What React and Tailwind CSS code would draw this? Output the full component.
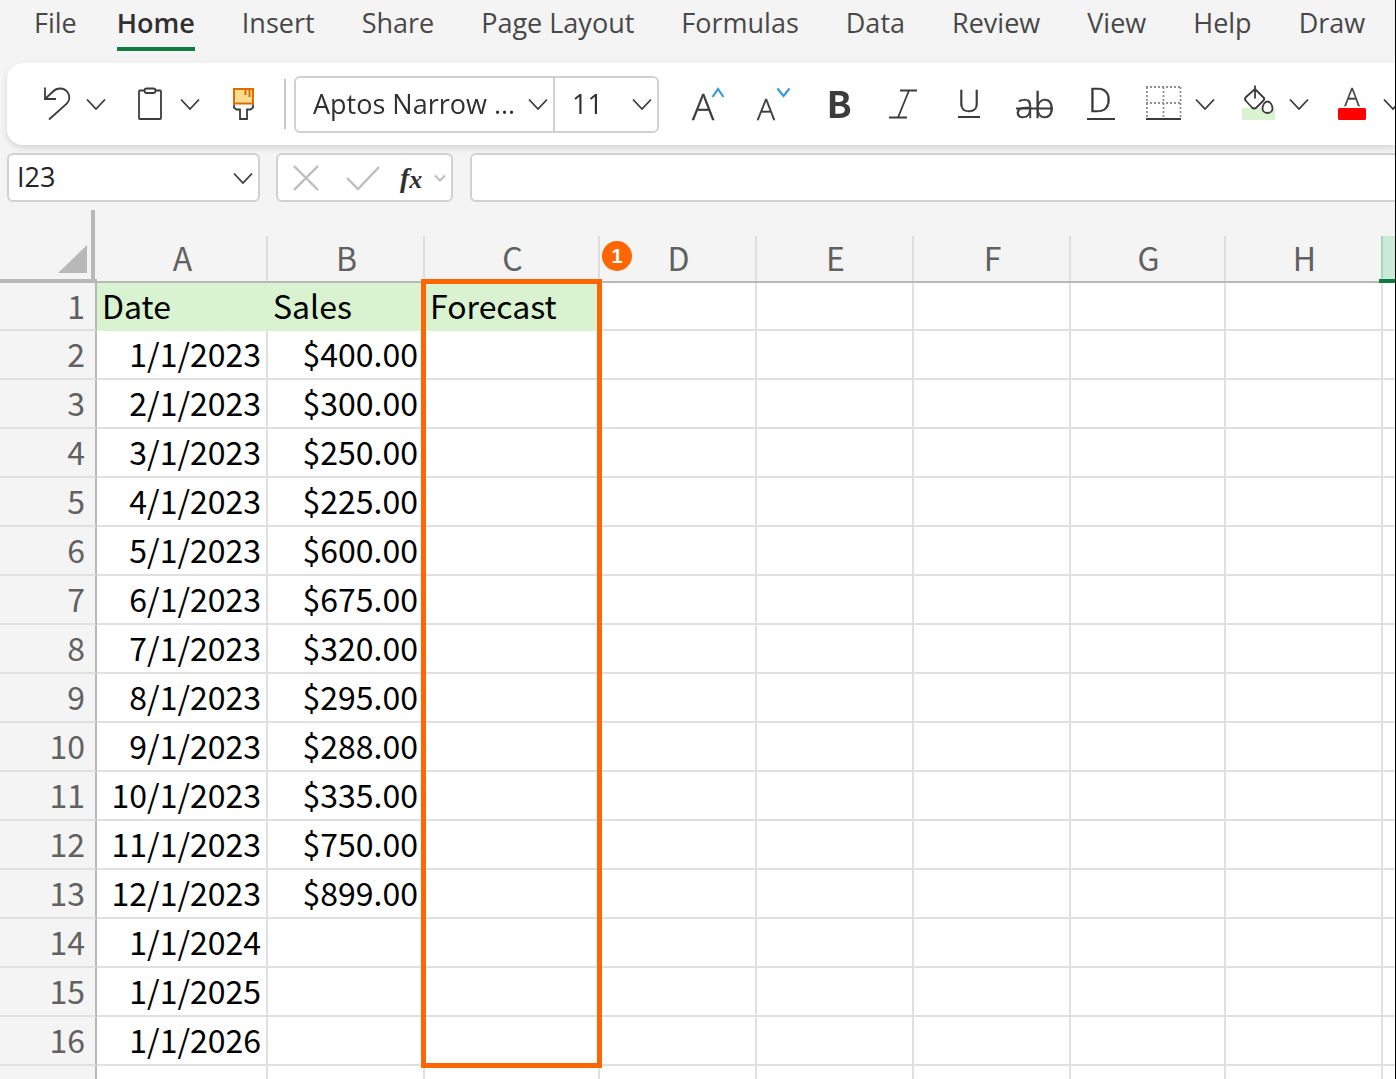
const tabs = ['File', 'Home', 'Insert', 'Share', 'Page Layout', 'Formulas', 'Data', 'Review', 'View', 'Help', 'Draw'];

const columns = ['A', 'B', 'C', 'D', 'E', 'F', 'G', 'H'];

const rows = [
  ['Date', 'Sales', 'Forecast'],
  ['1/1/2023', '$400.00'],
  ['2/1/2023', '$300.00'],
  ['3/1/2023', '$250.00'],
  ['4/1/2023', '$225.00'],
  ['5/1/2023', '$600.00'],
  ['6/1/2023', '$675.00'],
  ['7/1/2023', '$320.00'],
  ['8/1/2023', '$295.00'],
  ['9/1/2023', '$288.00'],
  ['10/1/2023', '$335.00'],
  ['11/1/2023', '$750.00'],
  ['12/1/2023', '$899.00'],
  ['1/1/2024'],
  ['1/1/2025'],
  ['1/1/2026'],
  [],
];

function Icon({ children }) {
  return (
    <svg viewBox="0 0 40 40" className="block h-10 w-10 overflow-visible" fill="none" stroke="#3b3b3b" strokeWidth="1.8" aria-hidden="true">
      {children}
    </svg>
  );
}

function Chevron() {
  return (
    <svg viewBox="0 0 24 40" className="block h-10 w-6" fill="none" stroke="#3b3b3b" strokeWidth="1.8" aria-hidden="true">
      <path d="M3 15.500l9 9.500 9-9.500" />
    </svg>
  );
}

function Tool({ label, children }) {
  return (
    <button type="button" aria-label={label} className="shrink-0">
      <Icon>{children}</Icon>
    </button>
  );
}

function SplitTool({ label, children }) {
  return (
    <div className="flex shrink-0 gap-2">
      <Tool label={label}>{children}</Tool>
      <button type="button" aria-label={label + ' options'}>
        <Chevron />
      </button>
    </div>
  );
}

function Letter({ x, y, size, className, children }) {
  return (
    <text x={x} y={y} fontSize={size} textAnchor="middle" fill="#3b3b3b" className={className}>
      {children}
    </text>
  );
}

const thin = "font-['Open_Sans'] font-light [stroke-width:0.5px]";

function Tabs() {
  return (
    <nav className="flex h-[63px] gap-[47px] overflow-hidden pl-[34px] text-[27px] leading-[45px] text-[#484848]">
      {tabs.map((t) => (
        <button
          key={t}
          type="button"
          className={
            t === 'Home'
              ? '-ml-[7px] flex h-[51px] shrink-0 border-b-4 border-[#107c41] font-semibold text-[#303030]'
              : 'flex h-[51px] shrink-0 border-b-4 border-transparent'
          }
        >
          {t}
        </button>
      ))}
    </nav>
  );
}

function Toolbar() {
  return (
    <div className="ml-[7px] flex h-[82px] items-center overflow-hidden rounded-l-2xl bg-white pl-[29px]">
      <div className="flex shrink-0 gap-[22px]">
        <SplitTool label="Undo">
          <path d="M9 3.500V15h11" />
          <path d="M9 15l8-7.500c2-2 4-3 7-3 8 0 12 8.500 7 15L13 35.500" />
        </SplitTool>
        <SplitTool label="Paste">
          <rect x="9" y="6.500" width="22" height="28.500" rx="1" />
          <rect x="14.500" y="4.500" width="11" height="4.500" rx="2.200" fill="#fff" />
        </SplitTool>
        <Tool label="Format painter">
          <rect x="10" y="5" width="19" height="14.500" fill="#fadb8f" stroke="#e06c00" strokeWidth="2" />
          <path d="M21.500 5v6M25.500 5v8" stroke="#e06c00" strokeWidth="2" />
          <path d="M10 20.500v3l2.500 2h3.500v9.500h7v-9.500h3.500l2.500-2v-3" />
        </Tool>
      </div>
      <div className="ml-5 h-[50px] w-0.5 shrink-0 bg-[#c8c8c8]" />
      <div className="ml-2 flex h-[57px] w-[365px] shrink-0 rounded-md border-2 border-[#d1d1d1] text-[27px] text-[#303030]">
        <div className="relative flex w-[259px] items-center border-r-2 border-[#d1d1d1]">
          <select aria-label="Font" className="h-full w-full appearance-none bg-transparent pl-[17px] outline-none">
            <option>Aptos Narrow ...</option>
          </select>
          <span className="pointer-events-none absolute right-[3px]">
            <Chevron />
          </span>
        </div>
        <div className="relative flex flex-1 items-center">
          <select aria-label="Font size" className="h-full w-full appearance-none bg-transparent pl-[17px] outline-none">
            <option>11</option>
          </select>
          <span className="pointer-events-none absolute right-[3px]">
            <Chevron />
          </span>
        </div>
      </div>
      <div className="ml-7 flex shrink-0 gap-[26px]">
        <Tool label="Increase font size">
          <Letter x="16" y="36" size="37" className={thin}>A</Letter>
          <path d="M25.500 13l5.500-8 5.500 8" stroke="#3a9bdc" strokeWidth="2.200" />
        </Tool>
        <Tool label="Decrease font size">
          <Letter x="13" y="36" size="30" className={thin}>A</Letter>
          <path d="M24.500 4.500l6 7.500 6-7.500" stroke="#3a9bdc" strokeWidth="2.200" />
        </Tool>
        <Tool label="Bold">
          <Letter x="20" y="34" size="37" className="[stroke:none] font-['Noto_Sans_CJK_SC'] font-bold">B</Letter>
        </Tool>
        <Tool label="Italic">
          <path d="M15 6.500h17M4 33.500h18M24 6.500L13 33.500" />
        </Tool>
        <Tool label="Underline">
          <Letter x="18" y="28" size="32" className={thin}>U</Letter>
          <path d="M7 33h22" />
        </Tool>
        <Tool label="Strikethrough">
          <Letter x="18" y="34" size="35" className={thin}>ab</Letter>
          <path d="M-1 24.500h37" />
        </Tool>
        <Tool label="Double underline">
          <Letter x="17" y="28" size="33" className={thin}>D</Letter>
          <path d="M4 35h28" />
        </Tool>
      </div>
      <div className="ml-[22px] flex shrink-0 gap-[22px]">
        <SplitTool label="Borders">
          <path d="M1 3h35M1 19h35M2 3v31M18.500 3v31M35.500 3v31" stroke="#8f8f8f" strokeDasharray="2 2" />
          <path d="M1 35h35" strokeWidth="2" />
        </SplitTool>
        <SplitTool label="Fill color">
          <rect x="3" y="24" width="33" height="12" rx="1.500" fill="#d9f2d0" stroke="none" />
          <path d="M16 1.500v13M16 5l8.500 8.500q1.500 1.500 0 3l-7 7q-2.500 2-4.500 0l-6-6.500q-2-2 0-4z" />
          <path d="M28.500 17.500c3 0 5 4 5 7a5 4.500 0 0 1-10 0c0-3 2-7 5-7z" fill="#fff" />
        </SplitTool>
        <SplitTool label="Font color">
          <Letter x="19" y="22" size="25" className={thin}>A</Letter>
          <rect x="5" y="24" width="28" height="12" rx="1.500" fill="#ff0000" stroke="none" />
        </SplitTool>
      </div>
    </div>
  );
}

function FormulaBar() {
  return (
    <div className="mt-2 flex h-[49px] pl-[7px]">
      <div className="flex w-[253px] shrink-0 items-center rounded-md border-2 border-[#d1d1d1] bg-white">
        <input aria-label="Name box" defaultValue="I23" className="w-0 flex-1 bg-transparent pl-2 text-[27px] text-[#242424] outline-none" />
        <button type="button" aria-label="Name box options" className="mr-[3px]">
          <Chevron />
        </button>
      </div>
      <div className="ml-4 flex w-[177px] shrink-0 items-center rounded-md border-2 border-[#d1d1d1] bg-white">
        <button type="button" aria-label="Cancel" className="ml-2">
          <svg viewBox="0 0 40 40" className="block h-10 w-10" fill="none" stroke="#bdbdbd" strokeWidth="2.400" aria-hidden="true">
            <path d="M8 8l24 24M32 8L8 32" />
          </svg>
        </button>
        <button type="button" aria-label="Enter" className="ml-4">
          <svg viewBox="0 0 40 40" className="block h-10 w-10" fill="none" stroke="#bdbdbd" strokeWidth="2.400" aria-hidden="true">
            <path d="M5 20l11 11L37 9" />
          </svg>
        </button>
        <button type="button" aria-label="Insert function" className="ml-[18px] flex items-center font-['Liberation_Serif'] text-[28px] leading-9 font-bold text-[#303030]">
          <i>f</i>
          <i className="pt-1 text-[26px]">x</i>
          <svg viewBox="0 0 12 12" className="ml-3 h-3 w-3" fill="none" stroke="#bdbdbd" strokeWidth="2" aria-hidden="true">
            <path d="M1 3.500l5 5 5-5" />
          </svg>
        </button>
      </div>
      <input aria-label="Formula bar" className="ml-[17px] min-w-0 flex-1 rounded-l-md border-y-2 border-l-2 border-[#d1d1d1] bg-white px-3 text-[27px] outline-none" />
    </div>
  );
}

function cellClass(r, c) {
  if (r === 0 && c < 3) return 'bg-[#d9f2d0] pl-[5px] text-left';
  if (c === 8) return 'border-b-2 border-[#e0e0e0] bg-white';
  return 'border-r-2 border-b-2 border-[#e0e0e0] bg-white pr-[5px] text-right';
}

function Sheet() {
  return (
    <div className="relative mt-2 font-['Noto_Sans_CJK_SC',sans-serif] text-[32px]">
      <table className="w-full table-fixed border-separate border-spacing-0 leading-[45px]">
        <colgroup>
          <col className="w-[97px]" />
          <col className="w-[171px]" />
          <col className="w-[157px]" />
          <col className="w-[175px]" />
          <col className="w-[157px]" />
          <col className="w-[157px]" />
          <col className="w-[157px]" />
          <col className="w-[155px]" />
          <col className="w-[157px]" />
          <col />
        </colgroup>
        <thead className="leading-[43px]">
          <tr className="h-[73px]">
            <th aria-label="Select all" className="border-b-4 border-[#b8b8b8] p-0 pr-0.5">
              <div className="flex h-[69px] items-end justify-end border-r-4 border-[#b8b8b8] pr-1 pb-1.5">
                <svg viewBox="0 0 29 28" className="h-7 w-[29px]" fill="#b8b8b8" aria-hidden="true">
                  <path d="M29 0v28H0z" />
                </svg>
              </div>
            </th>
            {columns.map((c) => (
              <th key={c} scope="col" className="border-b-2 border-[#b8b8b8] p-0 align-bottom font-normal text-[#616161]">
                <div className="h-[45px] border-r-2 border-[#dedede] pl-0.5">{c}</div>
              </th>
            ))}
            <th aria-label="I" className="relative p-0 align-bottom">
              <div className="h-[43px] border-l-2 border-[#a0d8b9] bg-[#caead8] -ml-0.5" />
              <div className="-ml-1 h-1 bg-[#107c41]" />
            </th>
          </tr>
        </thead>
        <tbody>
          {rows.map((row, r) => (
            <tr key={r} className={r === 0 ? 'h-12' : 'h-[49px]'}>
              <th scope="row" className="border-r-2 border-b-2 border-r-[#b8b8b8] border-b-[#e0e0e0] bg-[#f4f4f4] p-0 pr-2.5 text-right align-top font-normal text-[#616161]">
                {r + 1}
              </th>
              {[...columns, 'I'].map((c, i) => (
                <td key={c} className={'py-0 align-top whitespace-nowrap text-black ' + cellClass(r, i)}>
                  {row[i]}
                </td>
              ))}
            </tr>
          ))}
        </tbody>
      </table>
      <div className="pointer-events-none absolute top-[69px] left-[421px] h-[789px] w-[181px] border-5 border-[#ff6500]" />
      <div className="absolute top-[31px] left-[602px] flex h-[30px] w-[30px] items-center justify-center rounded-full bg-[#ff6500] font-['Liberation_Sans'] text-[20px] leading-none font-bold text-white">
        1
      </div>
    </div>
  );
}

export default function App() {
  return (
    <div className="h-screen overflow-hidden border-r border-black bg-[#f4f4f4] font-['Open_Sans',sans-serif]">
      <Tabs />
      <div className="drop-shadow-md">
        <Toolbar />
      </div>
      <FormulaBar />
      <Sheet />
    </div>
  );
}
